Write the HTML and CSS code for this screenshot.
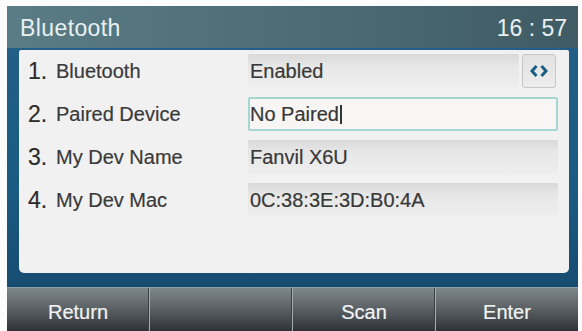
FILE: index.html
```html
<!DOCTYPE html>
<html lang="en">
<head>
<meta charset="utf-8"/>
<meta content="width=device-width, initial-scale=1.0" name="viewport"/>
<title>Bluetooth</title>
<link rel="stylesheet" href="styles.css">
</head>
<body>
<div class="screen">
  <!-- title bar -->
  <div class="titlebar">
    <span class="title">Bluetooth</span>
    <span class="clock">16 : 57</span>
  </div>

  <!-- settings list -->
  <div class="frame">
    <div class="panel">
      <div class="row">
        <div class="label"><span class="num">1.</span>Bluetooth</div>
        <div class="field">Enabled</div>
        <div class="toggle">
          <svg viewBox="0 0 20 14">
            <path d="M7.5 2L3 7l4.5 5M12.5 2L17 7l-4.5 5"></path>
          </svg>
        </div>
      </div>
      <div class="row">
        <div class="label"><span class="num">2.</span>Paired Device</div>
        <div class="field active">No Paired<span class="cursor"></span></div>
      </div>
      <div class="row">
        <div class="label"><span class="num">3.</span>My Dev Name</div>
        <div class="field">Fanvil X6U</div>
      </div>
      <div class="row">
        <div class="label"><span class="num">4.</span>My Dev Mac</div>
        <div class="field">0C:38:3E:3D:B0:4A</div>
      </div>
    </div>
  </div>

  <!-- soft keys -->
  <div class="softkeys">
    <div class="key">Return</div>
    <div class="key"></div>
    <div class="key">Scan</div>
    <div class="key">Enter</div>
  </div>
</div>
</body>
</html>
```

FILE: styles.css
```css
body {
  margin: 0;
  background-color: #fcfcfc;
  font-family: "Liberation Sans", Arial, sans-serif;
  overflow: hidden;
}

.screen {
  width: 571px;
  height: 325px;
  margin: 6px 0 0 7px;
  display: flex;
  flex-direction: column;
  overflow: hidden;
}

.titlebar {
  height: 42px;
  flex-shrink: 0;
  display: flex;
  justify-content: space-between;
  align-items: center;
  padding: 2px 11px 0 13px;
  box-sizing: border-box;
  background: linear-gradient(90deg, #5a7c85 0%, #4d6d76 50%, #3f5b64 100%);
  color: #e9f0f2;
  font-size: 23px;
}

.title {
  letter-spacing: 0.4px;
}

.frame {
  flex-shrink: 0;
  padding: 2px 9px 14px 12px;
  background: linear-gradient(180deg, #215f86 0%, #1b5a82 60%, #174c70 100%);
}

.panel {
  height: 223px;
  box-sizing: border-box;
  padding: 4px 11px 0 9px;
  background-color: #f1f1f1;
  border-radius: 2px 2px 5px 5px;
  display: flex;
  flex-direction: column;
  gap: 9px;
}

.row {
  display: flex;
  align-items: center;
  height: 34px;
}

.label {
  width: 220px;
  flex-shrink: 0;
  font-size: 20px;
  color: #3a3a3a;
  display: flex;
  align-items: center;
  -webkit-text-stroke: 0.2px #3a3a3a;
}

.num {
  width: 28px;
  font-size: 23px;
  color: #2a2a2a;
}

.field {
  flex: 1;
  height: 34px;
  box-sizing: border-box;
  display: flex;
  align-items: center;
  padding-left: 2px;
  font-size: 20px;
  color: #383838;
  -webkit-text-stroke: 0.2px #383838;
  background: linear-gradient(180deg, #d9d9d9 0%, #e7e7e7 35%, #eeeeee 100%);
  border-radius: 2px;
}

.field.active {
  background: #f8f6f5;
  border: 2px solid #a6d6d1;
  padding-left: 0;
}

.cursor {
  display: inline-block;
  width: 2px;
  height: 19px;
  margin-left: 1px;
  background-color: #333;
}

.toggle {
  width: 34px;
  height: 34px;
  box-sizing: border-box;
  margin: 0 2px 0 3px;
  border: 1px solid #c7c7c7;
  border-radius: 3px;
  background: linear-gradient(180deg, #e2e2e2 0%, #ededed 100%);
  display: flex;
  justify-content: center;
  align-items: center;
}

.toggle svg {
  width: 20px;
  height: 14px;
  fill: none;
  stroke: #1d5e88;
  stroke-width: 3;
}

.softkeys {
  height: 44px;
  flex-shrink: 0;
  display: flex;
  border-top: 1px solid #8d9ea5;
  background: linear-gradient(180deg, #7d878b 0%, #646b6f 35%, #474c50 70%, #2c2f32 100%);
}

.key {
  flex: 1;
  display: flex;
  justify-content: center;
  align-items: center;
  padding-top: 5px;
  color: #f1f3f3;
  font-size: 20px;
  -webkit-text-stroke: 0.2px #f1f3f3;
  border-right: 1px solid #a3adb1;
  box-shadow: inset -1px 0 0 #3b4043;
}

.key:last-child {
  border-right: none;
  box-shadow: none;
}
```
